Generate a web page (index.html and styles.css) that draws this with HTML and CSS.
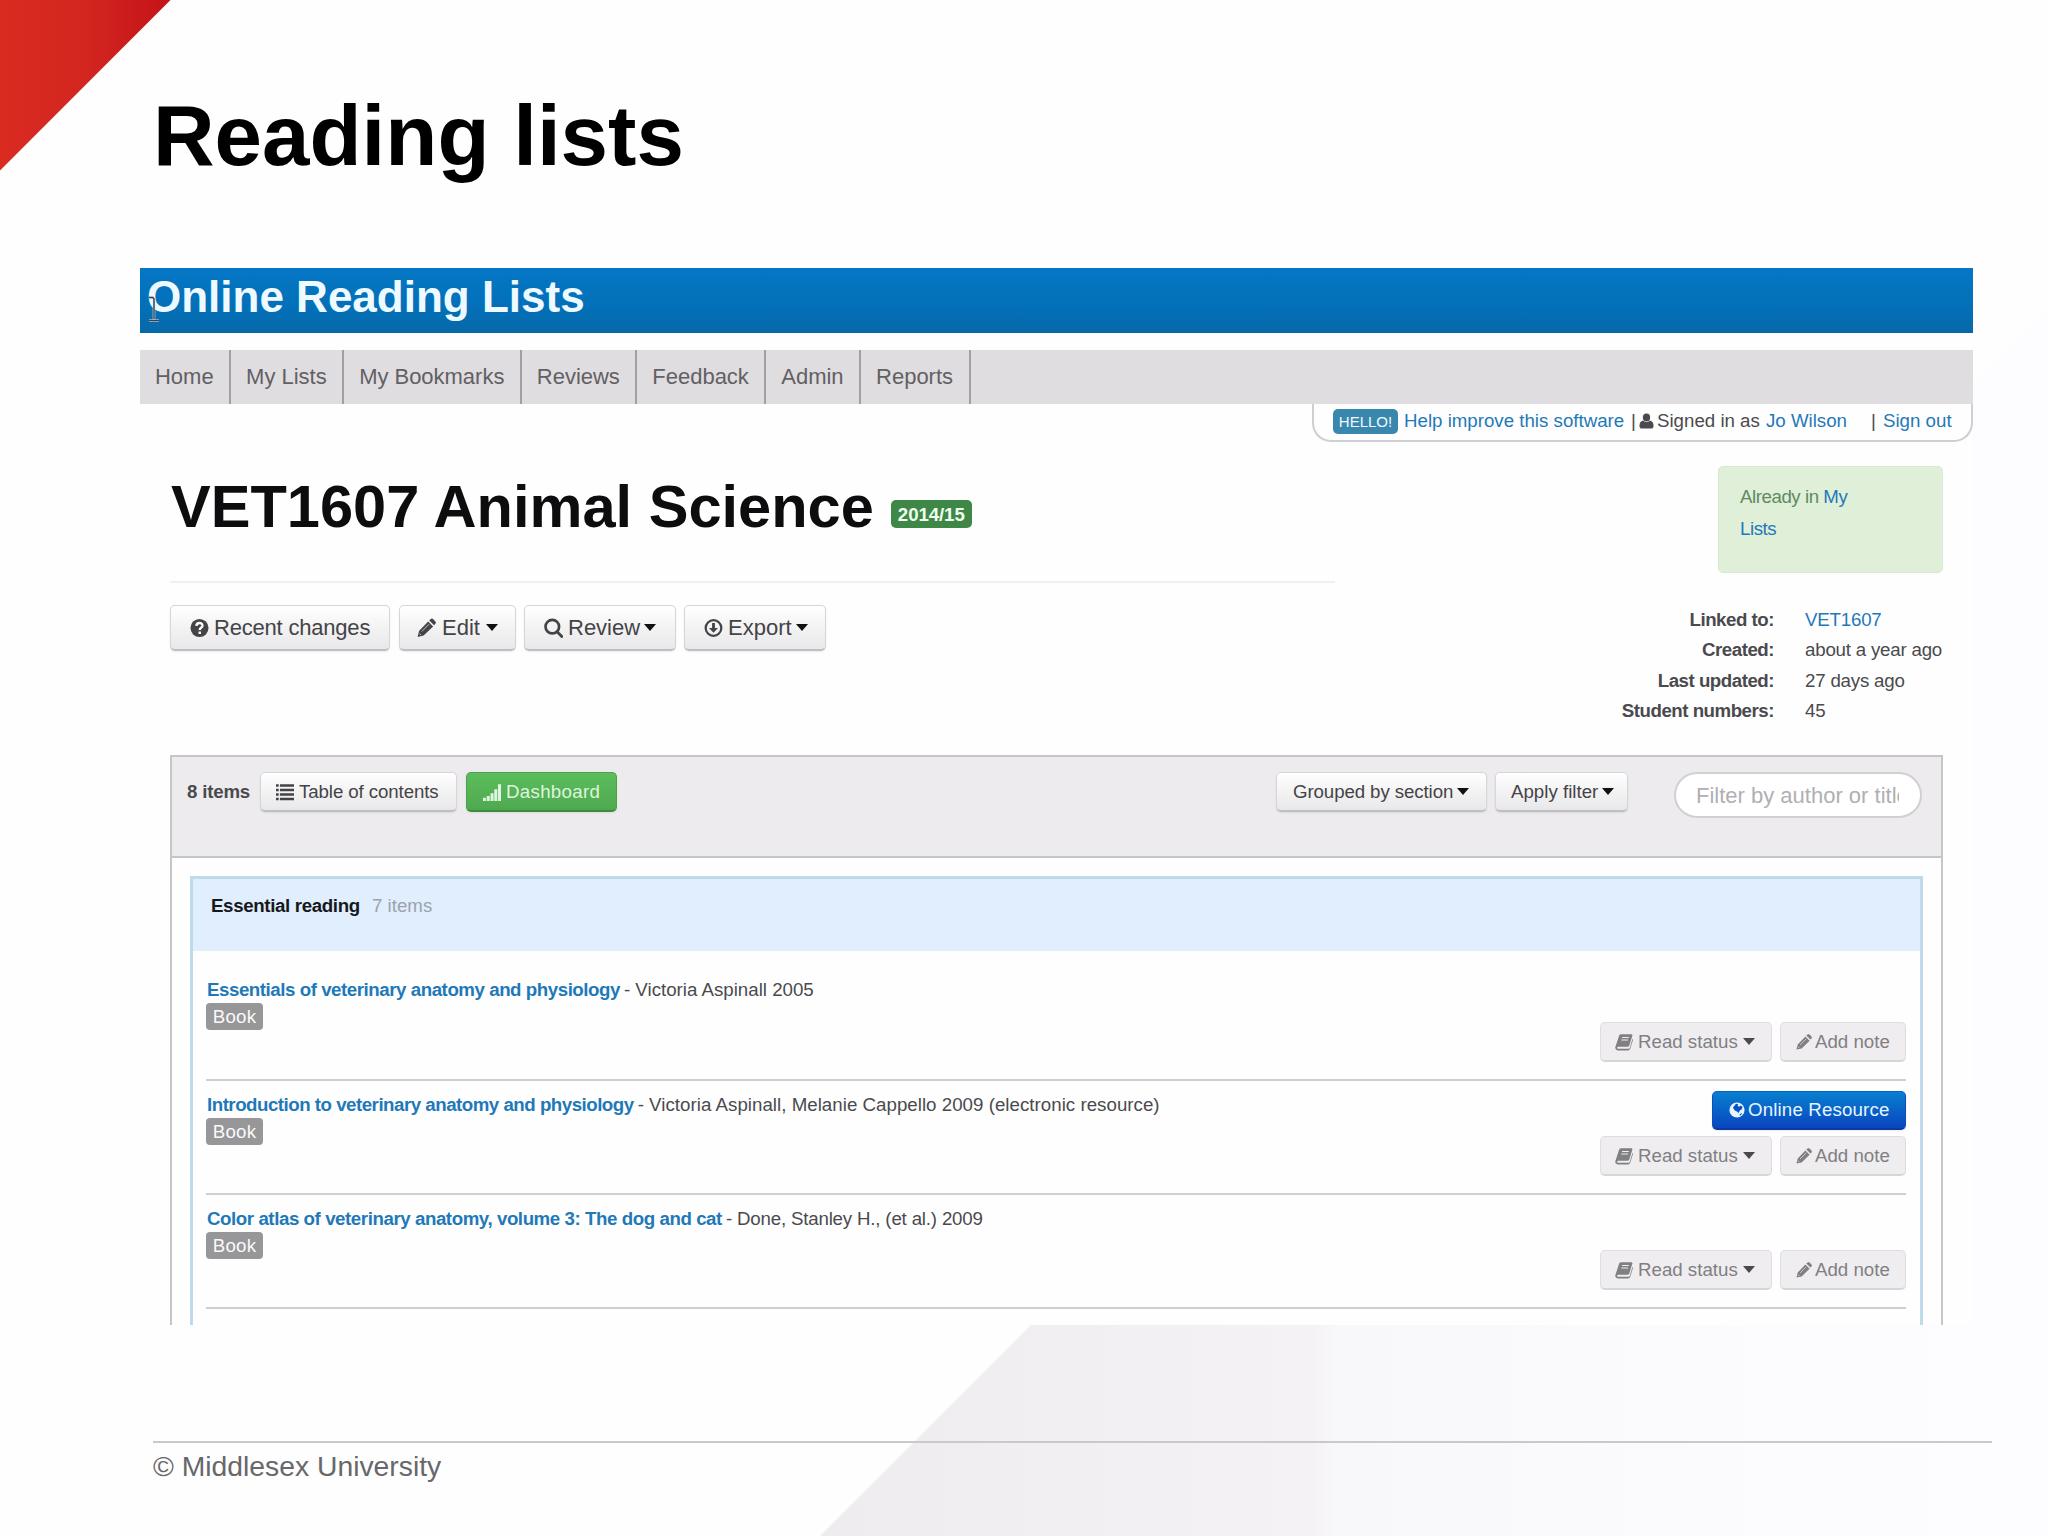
FILE: index.html
```html
<!DOCTYPE html>
<html lang="en">
<head>
<meta charset="utf-8">
<title>Reading lists</title>
<link rel="stylesheet" href="styles.css">
</head>
<body>
<svg class="sprite" aria-hidden="true">
  <symbol id="question" viewBox="0 0 16 16"><circle cx="8" cy="8" r="7.6"/><path d="M5.4 6.2C5.5 3 10.6 3.1 10.5 6c0 1.7-2.3 1.8-2.3 3.6M8.2 11v2" fill="none" stroke="#fff" stroke-width="2"/></symbol>
  <symbol id="pencil" viewBox="0 0 16 16"><path d="M0.5 15.500l1.200-5L9.400 2.500l4.200 4.200-8 7.700zM10.300 1.600L11.600.5q1-.8 1.900 0l2 2q.8.900 0 1.900l-1.100 1.200z"/><path d="M4 11l6.200-6.200M2 12.600L3.400 14" stroke="#fff" stroke-width=".8" opacity=".7"/></symbol>
  <symbol id="search" viewBox="0 0 16 16"><circle cx="7" cy="6.900" r="5.700" fill="none" stroke="currentColor" stroke-width="2.300"/><path d="M11 11.200l4 4" stroke="currentColor" stroke-width="2.400" stroke-linecap="round"/></symbol>
  <symbol id="download" viewBox="0 0 16 16"><circle cx="8" cy="8" r="6.6" fill="none" stroke="currentColor" stroke-width="1.9"/><path d="M6.8 3.8h2.4V8h2.6L8 12 4.2 8h2.6z"/></symbol>
  <symbol id="list" viewBox="0 0 16 16"><path d="M0 1h2.4v2.300H0zM3.500 1H16v2.300H3.500zM0 5h2.400v2.300H0zM3.500 5H16v2.300H3.500zM0 9h2.400v2.300H0zM3.500 9H16v2.300H3.500zM0 13h2.400v2.300H0zM3.500 13H16v2.300H3.500z"/></symbol>
  <symbol id="signal" viewBox="0 0 16 16"><path d="M0 13h2.6v3H0zM3.300 11.500h2.700V16H3.300zM6.700 9h2.700v7H6.700zM10 5.500h2.700V16H10zM13.300 1H16v15h-2.700z"/></symbol>
  <symbol id="person" viewBox="0 0 16 16"><ellipse cx="8" cy="4.300" rx="3.900" ry="4.300"/><path d="M4.300 7.500Q8 11 11.700 7.500 15.500 8.500 15.500 13q0 3-2.500 3H3Q.5 16 .5 13q0-4.500 3.800-5.500z"/></symbol>
  <symbol id="book" viewBox="0 0 16 16"><path d="M5.500 1h9q1.300.2.900 1.500L12.700 11q-.4 1.300-1.700 1.300H3q-1.300.2-1 1.200.2.500 1.200.5h8.900q.8 0 1.100-.8L15.600 5q.6.500.3 1.400L13.500 14q-.5 1.500-1.900 1.500H2.500Q0 15.300.2 12.800L3.700 2.300Q4.200 1 5.500 1z"/><path d="M6.300 4h6M5.600 6.200h6" stroke="#eee" stroke-width="1"/></symbol>
  <symbol id="globe" viewBox="0 0 16 16"><circle cx="8" cy="8" r="7.600"/><path d="M7 1.800l2.200.4-.6 1.600L10 4.800l1.700-1.300L13.600 5l-1 2.500-1.600.8L9.500 11 8 9.500 5.500 8.300 4 5.500zM10.800 12.300l2.200-1.500-.8 2.300-1.400.7z" fill="#0a50c4"/></symbol>
</svg>

<div class="slide">
  <svg class="backdrop" viewBox="0 0 2048 1536" aria-hidden="true">
    <defs>
      <linearGradient id="red" x1="0" x2="1"><stop offset="0" stop-color="#d92b20"/><stop offset=".5" stop-color="#d3261f"/><stop offset="1" stop-color="#c41319"/></linearGradient>
      <linearGradient id="haze" gradientUnits="userSpaceOnUse" x1="820" x2="2048" y1="0" y2="0"><stop offset="0" stop-color="#eeecef"/><stop offset=".4" stop-color="#f4f2f5"/><stop offset=".42" stop-color="#f8f7fa"/><stop offset=".8" stop-color="#fcfbfd"/><stop offset="1" stop-color="#fdfcfe"/></linearGradient>
    </defs>
    <path d="M0 0H170.500L0 170.500z" fill="url(#red)"/>
    <path d="M820 1536L2048 308V1536z" fill="url(#haze)"/>
  </svg>

  <header class="slide-head"><h1 class="slide-title">Reading lists</h1></header>

  <main class="app">
    <div class="brand">Online Reading Lists
      <svg class="cursor" viewBox="0 0 12 26"><path d="M1 1.500h4M6 2v22M1 24.500h10" fill="none" stroke="#cfe0ee" stroke-width="2.600"/><path d="M1 1.500h4L6 3v20M1 24.500h10" fill="none" stroke="#3a4148" stroke-width="1.400"/></svg>
    </div>
    <nav class="nav"><a>Home</a><a>My Lists</a><a>My Bookmarks</a><a>Reviews</a><a>Feedback</a><a>Admin</a><a>Reports</a></nav>

    <div class="user-row">
      <div class="user">
        <span class="hello">HELLO!</span><a class="link help">Help improve this software</a><span class="bar">|</span>
        <svg class="ico person"><use href="#person"/></svg><span class="signed">Signed in as</span><a class="link jo">Jo Wilson</a><span class="bar2">|</span><a class="link out">Sign out</a>
      </div>
    </div>

    <section class="intro">
      <div class="intro-main">
        <div class="heading"><h2 class="course">VET1607 Animal Science</h2><span class="year">2014/15</span></div>
        <div class="actions">
          <button class="btn recent"><svg class="ico"><use href="#question"/></svg><span>Recent changes</span></button>
          <button class="btn edit"><svg class="ico"><use href="#pencil"/></svg><span>Edit</span><i class="caret"></i></button>
          <button class="btn review"><svg class="ico"><use href="#search"/></svg><span>Review</span><i class="caret"></i></button>
          <button class="btn export"><svg class="ico"><use href="#download"/></svg><span>Export</span><i class="caret"></i></button>
        </div>
      </div>
      <aside class="side">
        <div class="notice">Already in <a class="link">My<br>Lists</a></div>
        <dl class="meta">
          <dt>Linked to:</dt><dd><a class="link">VET1607</a></dd>
          <dt>Created:</dt><dd>about a year ago</dd>
          <dt>Last updated:</dt><dd>27 days ago</dd>
          <dt>Student numbers:</dt><dd>45</dd>
        </dl>
      </aside>
    </section>

    <section class="panel">
      <div class="toolbar">
        <b class="count">8 items</b>
        <button class="btn sm toc"><svg class="ico"><use href="#list"/></svg><span>Table of contents</span></button>
        <button class="btn sm dash"><svg class="ico"><use href="#signal"/></svg><span>Dashboard</span></button>
        <button class="btn sm group"><span>Grouped by section</span><i class="caret"></i></button>
        <button class="btn sm filter"><span>Apply filter</span><i class="caret"></i></button>
        <div class="search"><span class="search-text">Filter by author or title</span></div>
      </div>
      <div class="section">
        <div class="section-head"><b class="section-name">Essential reading</b><span class="section-count">7 items</span></div>
        <article class="item first">
          <div class="item-text"><p class="item-line"><a class="link title t1">Essentials of veterinary anatomy and physiology</a><span class="by b1">- Victoria Aspinall 2005</span></p><span class="kind">Book</span></div>
          <div class="item-actions"><div class="pair">
            <button class="btn sm soft read"><svg class="ico"><use href="#book"/></svg><span>Read status</span><i class="caret"></i></button>
            <button class="btn sm soft note"><svg class="ico"><use href="#pencil"/></svg><span>Add note</span></button></div></div>
        </article>
        <article class="item">
          <div class="item-text"><p class="item-line"><a class="link title t2">Introduction to veterinary anatomy and physiology</a><span class="by b2">- Victoria Aspinall, Melanie Cappello 2009 (electronic resource)</span></p><span class="kind">Book</span></div>
          <div class="item-actions">
            <button class="btn sm online"><svg class="ico"><use href="#globe"/></svg><span>Online Resource</span></button>
            <div class="pair">
            <button class="btn sm soft read"><svg class="ico"><use href="#book"/></svg><span>Read status</span><i class="caret"></i></button>
            <button class="btn sm soft note"><svg class="ico"><use href="#pencil"/></svg><span>Add note</span></button></div></div>
        </article>
        <article class="item">
          <div class="item-text"><p class="item-line"><a class="link title t3">Color atlas of veterinary anatomy, volume 3: The dog and cat</a><span class="by b3">- Done, Stanley H., (et al.) 2009</span></p><span class="kind">Book</span></div>
          <div class="item-actions"><div class="pair">
            <button class="btn sm soft read"><svg class="ico"><use href="#book"/></svg><span>Read status</span><i class="caret"></i></button>
            <button class="btn sm soft note"><svg class="ico"><use href="#pencil"/></svg><span>Add note</span></button></div></div>
        </article>
      </div>
    </section>
  </main>

  <footer class="foot">© Middlesex University</footer>
</div>
</body>
</html>
```
FILE: styles.css
```css
* { box-sizing: border-box; }
body { margin: 0; background: #fefefe; font-family: "Liberation Sans", Arial, sans-serif; }
h1, h2, p, dl, dd { margin: 0; }
.sprite { position: absolute; width: 0; height: 0; }
.slide { position: relative; width: 2048px; height: 1536px; overflow: hidden; display: flex; flex-direction: column; }
.backdrop { position: absolute; inset: 0; width: 2048px; height: 1536px; }
.slide-head { position: relative; height: 268px; padding: 86px 0 0 153px; }
.slide-title { font-size: 85.300px; line-height: 100px; color: #000; }

.app { position: relative; width: 1833px; height: 1057px; margin-left: 140px; background: #fefefe; overflow: hidden; color: #4a4a4e; font-size: 18.700px; }
.brand { position: relative; height: 65px; padding-left: 7px; font-size: 44px; font-weight: bold; line-height: 57px; color: #eefaff; background: linear-gradient(#0577c5, #036fb7 65%, #0868a6); }
.cursor { position: absolute; left: 8px; top: 28px; width: 12px; height: 26px; }
.nav { display: flex; height: 54px; margin-top: 17px; background: #dfdde0; }
.nav a { padding: 0 15.500px 0 15px; border-right: 2px solid #a19fa3; font-size: 22px; line-height: 54px; color: #626064; letter-spacing: -.02px; }
.link { color: #1f79b8; }

.user-row { display: flex; justify-content: flex-end; height: 38px; margin-bottom: -1px; }
.user { display: flex; width: 661px; height: 38px; padding-left: 19px; line-height: 33px; border: 2px solid #cfced1; border-top: 0; border-radius: 0 0 19px 19px; white-space: nowrap; }
.hello { width: 65px; height: 25px; margin: 5px 6px 0 0; border-radius: 5px; background: #3a87ad; color: #eefaff; font-size: 15px; line-height: 26px; text-align: center; }
.help { width: 227px; }
.bar { width: 8px; }
.person { width: 15px; height: 16px; margin: 9px 3px 0 0; }
.signed { width: 109px; }
.jo { width: 105px; }
.bar2 { width: 12px; }
.ico { flex: none; fill: currentColor; }

.intro { display: flex; justify-content: space-between; height: 314px; padding: 25px 30px 0 30px; }
.intro-main { width: 1165px; }
.heading { display: flex; height: 117px; border-bottom: 2px solid #f0eff2; }
.course { padding-left: 1px; font-size: 59.550px; line-height: 82px; color: #0d0d0f; white-space: nowrap; }
.year { width: 81px; height: 28px; margin: 34px 0 0 17px; border-radius: 5px; background: #3f8747; color: #effff0; font-size: 18.700px; font-weight: bold; line-height: 29px; text-align: center; letter-spacing: -.1px; }
.actions { display: flex; gap: 8px; margin-top: 22px; }
.btn { display: flex; align-items: center; height: 46px; margin: 0; padding: 0; border: 1px solid #d6d5d9; border-bottom: 2px solid #bfbec2; border-radius: 5px; background: linear-gradient(#fff, #e8e7e9); box-shadow: 0 1px 2px rgba(0,0,0,.08); font: 22px "Liberation Sans", Arial, sans-serif; color: #444347; white-space: nowrap; }
.btn .ico { width: 19px; height: 20px; margin-right: 5px; }
.caret { width: 0; height: 0; margin-left: 6px; border: 6.500px solid transparent; border-top: 7px solid #111; border-bottom: 0; }
.recent { width: 220px; padding-left: 19px; letter-spacing: -.2px; }
.edit { width: 117px; margin-left: 1px; padding-left: 17px; }
.edit .ico { margin-right: 6px; }
.review { width: 152px; padding-left: 19px; }
.review .caret, .export .caret { margin-left: 4px; }
.export { width: 142px; padding-left: 19px; }

.side { width: 341px; }
.notice { width: 225px; height: 107px; margin-left: 116px; padding: 14px 21px; border-radius: 5px; background: #dfefd8; border: 1px solid #d9e8d2; color: #5f8b62; line-height: 32px; letter-spacing: -.45px; }
.meta { display: grid; grid-template-columns: 172px 1fr; column-gap: 31px; margin-top: 32px; line-height: 30.400px; letter-spacing: -.2px; white-space: nowrap; }
.meta dt { font-weight: bold; text-align: right; letter-spacing: -.48px; }

.panel { width: 1773px; height: 620px; margin-left: 30px; border: 2px solid #c6c5c9; }
.toolbar { display: flex; height: 101px; padding: 15px 0 0 15px; border-bottom: 2px solid #c6c5c9; background: #edebee; }
.count { width: 73px; line-height: 39px; letter-spacing: -.2px; }
.sm { height: 40px; font-size: 18.700px; }
.sm span { padding-top: 1px; }
.toc { width: 197px; padding-left: 15px; letter-spacing: -.1px; }
.dash { width: 151px; margin-left: 9px; padding-left: 16px; letter-spacing: .3px; color: #dff5df; background: linear-gradient(#5bbd5b, #4fa950); border-color: #4ca24c #4ca24c #3d8c3d; }
.group { width: 211px; margin-left: 659px; padding-left: 16px; letter-spacing: -.1px; }
.filter { width: 133px; margin-left: 8px; padding-left: 15px; }
.group .caret, .filter .caret { margin-left: 4px; }
.sm .ico { width: 18px; height: 18px; }
.search { width: 248px; height: 46px; margin-left: 46px; padding: 0 21px 0 20px; border: 2px solid #d0cfd2; border-radius: 24px; background: #fff; font-size: 22px; line-height: 43px; color: #b0afb3; }
.search-text { display: block; overflow: hidden; white-space: nowrap; }

.section { height: 460px; margin: 18px 18px 0; border: 3px solid #bfdaeb; border-bottom: 0; }
.section-head { display: flex; height: 72px; padding-left: 18px; background: #e0eefd; line-height: 53px; }
.section-name { width: 161px; color: #17181c; letter-spacing: -.35px; }
.section-count { color: #9ba3ae; }
.item { display: flex; justify-content: space-between; height: 114px; margin: 0 14px 0 13px; padding: 10px 0 17px; border-bottom: 2px solid #cfced1; }
.first { height: 130px; padding-top: 25px; }
.item-line { display: flex; gap: 4px; padding-left: 1px; line-height: 27px; white-space: nowrap; }
.title { font-weight: bold; }
.t1 { letter-spacing: -.45px; }
.t2 { letter-spacing: -.49px; }
.t3 { letter-spacing: -.43px; }
.b1 { letter-spacing: 0; }
.b2 { letter-spacing: .03px; }
.b3 { letter-spacing: -.18px; }
.kind { display: block; width: 57px; height: 27px; border-radius: 4px; background: #979698; color: #fafafa; line-height: 28px; text-align: center; letter-spacing: .2px; }
.item-actions { display: flex; flex-direction: column; align-items: flex-end; justify-content: flex-end; gap: 6px; }
.pair { display: flex; gap: 8px; }
.soft { color: #807f83; background: #efedef; border: 1px solid #dedde0; border-bottom: 2px solid #d6d5d8; box-shadow: none; }
.soft span { padding: 0; }
.soft .caret { margin-left: 5px; border-top-color: #4a494d; }
.read { width: 172px; padding-left: 14px; }
.note { width: 126px; padding-left: 15px; }
.note .ico { width: 16px; margin-right: 3px; }
.online { width: 194px; padding-left: 16px; letter-spacing: .15px; color: #e6f6ff; background: linear-gradient(#0780cf, #0a45c0); border-color: #0a5fc4 #0a4fc0 #0a3aa0; }
.online span { padding: 0; }
.online .ico { width: 16px; margin-right: 3px; }

.foot { position: relative; width: 1839px; margin: 116px 0 0 153px; border-top: 2px solid #c9c8cb; font-size: 28.300px; line-height: 46px; color: #68676b; }
```
